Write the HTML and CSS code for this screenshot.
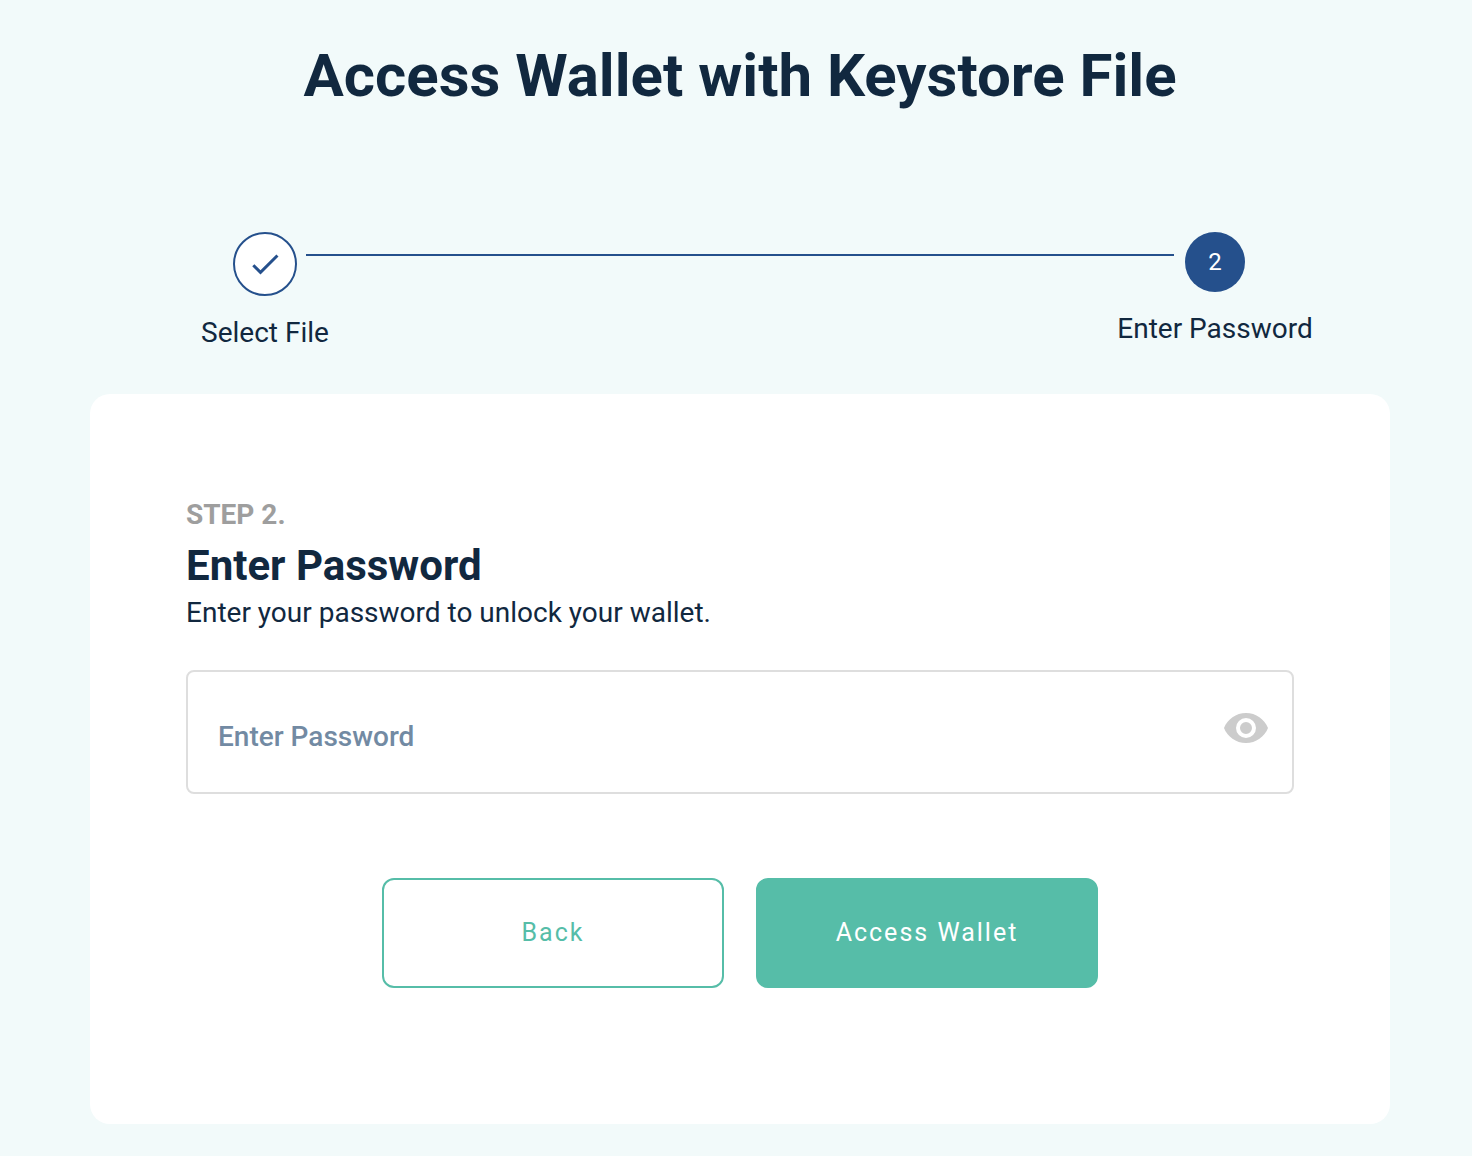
FILE: index.html
```html
<!DOCTYPE html>
<html lang="en">
<head>
<meta charset="utf-8">
<meta name="viewport" content="width=device-width, initial-scale=1">
<title>Access Wallet with Keystore File</title>
<link rel="stylesheet" href="styles.css">
</head>
<body>
<main class="page">
  <h1 class="page-title">Access Wallet with Keystore File</h1>
  <ol class="stepper">
    <li class="step">
      <span class="step-mark step-done">
        <svg class="check" viewBox="0 0 24 24" aria-hidden="true"><path d="M21 7 9 19l-5.500-5.500 1.410-1.410L9 16.170 19.590 5.590z" fill="currentColor"/></svg>
      </span>
      <span class="step-label">Select File</span>
    </li>
    <li class="step-line" aria-hidden="true"></li>
    <li class="step" aria-current="step">
      <span class="step-mark step-current">2</span>
      <span class="step-label">Enter Password</span>
    </li>
  </ol>
  <form class="card">
    <p class="eyebrow">STEP 2.</p>
    <h2 class="card-title">Enter Password</h2>
    <p class="card-text">Enter your password to unlock your wallet.</p>
    <div class="field">
      <input class="field-input" type="password" placeholder="Enter Password" aria-label="Enter Password">
      <button class="reveal" type="button" aria-label="Show password">
        <svg class="eye" viewBox="0 0 24 24" aria-hidden="true"><path d="M12 9a3 3 0 0 1 3 3 3 3 0 0 1-3 3 3 3 0 0 1-3-3 3 3 0 0 1 3-3m0-4.500c5 0 9.270 3.110 11 7.500-1.730 4.390-6 7.500-11 7.500S2.730 16.390 1 12c1.730-4.390 6-7.500 11-7.500m0 2.500a5 5 0 0 0-5 5 5 5 0 0 0 5 5 5 5 0 0 0 5-5 5 5 0 0 0-5-5z" fill="currentColor"/></svg>
      </button>
    </div>
    <div class="actions">
      <button class="btn btn-outline" type="button">Back</button>
      <button class="btn btn-solid" type="submit">Access Wallet</button>
    </div>
  </form>
</main>
</body>
</html>
```
FILE: styles.css
```css
* {
  box-sizing: border-box;
}

body {
  margin: 0;
  background: #f2fafa;
  color: #11283f;
  font-family: Roboto, "Liberation Sans", sans-serif;
}

h1,
h2,
p,
ol {
  margin: 0;
  padding: 0;
}

.page {
  padding: 40px 82px 32px 90px;
}

.page-title {
  font-size: 60px;
  line-height: 72px;
  font-weight: 700;
  text-align: center;
}

.stepper {
  display: flex;
  align-items: flex-start;
  justify-content: space-between;
  margin-top: 120px;
  padding: 0 50px;
  list-style: none;
}

.step {
  display: flex;
  flex-direction: column;
  align-items: center;
  flex: none;
  width: 250px;
  gap: 20px;
}

.step-mark {
  display: flex;
  align-items: center;
  justify-content: center;
  border-radius: 50%;
}

.step-done {
  width: 64px;
  height: 64px;
  border: 2px solid #25508c;
  background: #fff;
  color: #25508c;
}

.step-current {
  width: 60px;
  height: 60px;
  background: #25508c;
  color: #fff;
  font-size: 24px;
}

.step-label {
  font-size: 28px;
  line-height: 34px;
}

.check {
  width: 36px;
  height: 36px;
}

.step-line {
  flex: 1;
  height: 2px;
  margin: 22px -84px 0;
  background: #25508c;
}

.card {
  margin-top: 44px;
  padding: 104px 96px 136px;
  border-radius: 20px;
  background: #fff;
}

.eyebrow {
  color: #9e9e9e;
  font-size: 28px;
  line-height: 34px;
  font-weight: 700;
}

.card-title {
  margin-top: 6px;
  font-size: 42px;
  line-height: 56px;
  font-weight: 700;
}

.card-text {
  font-size: 28px;
  line-height: 38px;
}

.field {
  display: flex;
  align-items: center;
  height: 124px;
  margin-top: 38px;
  padding: 0 22px 0 30px;
  border: 2px solid #dedede;
  border-radius: 8px;
}

.field-input {
  flex: 1;
  min-width: 0;
  padding: 10px 0 0;
  border: 0;
  outline: 0;
  background: transparent;
  color: #11283f;
  font: 500 28px/32px Roboto, "Liberation Sans", sans-serif;
}

.field-input::placeholder {
  color: #728aa3;
  opacity: 1;
}

.reveal {
  display: flex;
  margin-bottom: 8px;
  padding: 0;
  border: 0;
  background: none;
  color: #ccc;
}

.eye {
  width: 48px;
  height: 48px;
}

.actions {
  display: flex;
  justify-content: center;
  gap: 32px;
  margin-top: 84px;
}

.btn {
  width: 342px;
  height: 110px;
  border: 2px solid #56bda8;
  border-radius: 12px;
  font: 400 25px/32px Roboto, "Liberation Sans", sans-serif;
  letter-spacing: 2px;
}

.btn-outline {
  background: #fff;
  color: #56bda8;
}

.btn-solid {
  background: #56bda8;
  color: #fff;
}
```
